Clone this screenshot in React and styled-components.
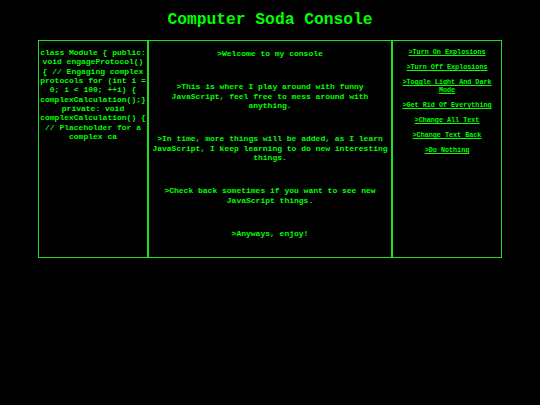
import React from "react";
import styled, { createGlobalStyle } from "styled-components";

const GlobalStyle = createGlobalStyle`
  html, body {
    margin: 0;
    padding: 0;
    background: #000;
  }
  body {
    font-family: "Liberation Mono", "Courier New", monospace;
    color: #00ff00;
  }
`;

const Page = styled.main`
  display: flex;
  flex-direction: column;
  align-items: center;
  width: 540px;
  height: 405px;
  background: #000;
`;

const Title = styled.h1`
  margin: 10.5px 0 11.5px;
  font-size: 16.3px;
  line-height: 18px;
  font-weight: bold;
  color: #00ff00;
  text-align: center;
`;

const Grid = styled.section`
  display: flex;
  width: 464px;
  height: 218px;
`;

const Panel = styled.div`
  box-sizing: border-box;
  width: ${(p) => p.width}px;
  height: 100%;
  border: 1px solid #22dd22;
  padding: ${(p) => p.top || 7}px ${(p) => p.pad || 1}px 0;
  text-align: center;
  font-weight: bold;
  display: flex;
  flex-direction: column;
  align-items: center;
  gap: ${(p) => p.gap || 0}px;
`;

const Code = styled.p`
  margin: 0;
  font-size: 8px;
  line-height: 9.35px;
`;

const Line = styled.p`
  margin: 0;
  font-size: 8px;
  line-height: 9.5px;
`;

const Action = styled.a`
  display: block;
  font-size: 6.75px;
  line-height: 8px;
  color: #00ff00;
  text-decoration: underline;
  cursor: pointer;
`;

const code =
  "class Module { public: void engageProtocol() { // Engaging complex protocols for (int i = 0; i < 100; ++i) { complexCalculation();} private: void complexCalculation() { // Placeholder for a complex ca";

const lines = [
  ">Welcome to my console",
  ">This is where I play around with funny JavaScript, feel free to mess around with anything.",
  ">In time, more things will be added, as I learn JavaScript, I keep learning to do new interesting things.",
  ">Check back sometimes if you want to see new JavaScript things.",
  ">Anyways, enjoy!",
];

const actions = [
  ">Turn On Explosions",
  ">Turn Off Explosions",
  ">Toggle Light And Dark Mode",
  ">Get Rid Of Everything",
  ">Change All Text",
  ">Change Text Back",
  ">Do Nothing",
];

export default function App() {
  return (
    <>
      <GlobalStyle />
      <Page>
        <Title>Computer Soda Console</Title>
        <Grid>
          <Panel width={110}>
            <Code>{code}</Code>
          </Panel>
          <Panel width={244} pad={3} top={8} gap={23.6}>
            {lines.map((l) => (
              <Line key={l}>{l}</Line>
            ))}
          </Panel>
          <Panel width={110} pad={4} gap={7}>
            {actions.map((a) => (
              <Action key={a}>{a}</Action>
            ))}
          </Panel>
        </Grid>
      </Page>
    </>
  );
}
